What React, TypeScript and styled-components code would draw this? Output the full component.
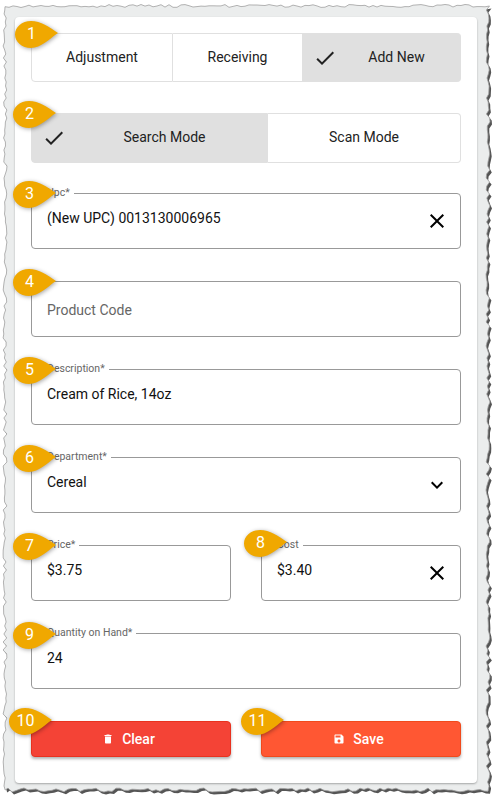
import { ReactNode } from 'react';
import styled, { createGlobalStyle } from 'styled-components';

const GlobalStyle = createGlobalStyle`
    html, body {
        margin: 0;
        background: #fff;
        font-family: Roboto, "Liberation Sans", sans-serif;
    }
`;

const Page = styled.div`
    position: relative;
    width: 504px;
    height: 808px;
    overflow: hidden;
    box-sizing: border-box;
    padding: 17px 27px 25px 15px;
`;

const TornEdge = styled.svg`
    position: absolute;
    left: 0;
    top: 0;
`;

const Card = styled.main`
    position: relative;
    box-sizing: border-box;
    height: 766px;
    padding: 16px;
    background: #fff;
    border-radius: 4px;
    box-shadow: 0 1px 2px rgba(0, 0, 0, 0.3);
    display: flex;
    flex-direction: column;
    gap: 32px;
`;

const ToggleGroup = styled.div<{ $columns: string; $height: number; $pull: number }>`
    display: grid;
    grid-template-columns: ${p => p.$columns};
    height: ${p => p.$height}px;
    margin-bottom: -${p => p.$pull}px;

    button {
        padding-bottom: ${p => p.$pull}px;
    }
`;

const Toggle = styled.button<{ $selected?: boolean }>`
    display: flex;
    align-items: center;
    justify-content: center;
    padding: ${p => (p.$selected ? '0 4px 0 10px' : '0')};
    border: 1px solid #e0e0e0;
    border-left-width: 0;
    background: ${p => (p.$selected ? '#e0e0e0' : '#fff')};
    color: #222;
    font: 400 14px Roboto, sans-serif;

    &:first-child {
        border-left-width: 1px;
        border-radius: 4px 0 0 4px;
    }

    &:last-child {
        border-radius: 0 4px 4px 0;
    }

    svg {
        margin-top: 1px;
    }

    span {
        flex: 1;
        text-align: center;
    }
`;

const FieldRow = styled.div`
    display: grid;
    grid-template-columns: 200px 200px;
    gap: 30px;
`;

const FieldBox = styled.div`
    position: relative;
    display: flex;
    align-items: center;
    box-sizing: border-box;
    height: 56px;
    padding: 0 11px 0 15px;
    border: 1px solid #999;
    border-radius: 4px;
`;

const FieldLabel = styled.label`
    position: absolute;
    left: 11px;
    top: -7px;
    padding: 0 4px;
    background: #fff;
    color: #666;
    font-size: 10.5px;
    line-height: 12px;
`;

const FieldInput = styled.input<{ $lift: number }>`
    flex: 1;
    min-width: 0;
    height: 100%;
    box-sizing: border-box;
    padding: ${p => (p.$lift < 0 ? -p.$lift : 0)}px 0 ${p => (p.$lift > 0 ? p.$lift : 0)}px;
    border: 0;
    outline: 0;
    background: transparent;
    color: #111;
    font: 400 14px Roboto, sans-serif;

    &::placeholder {
        color: #666;
        opacity: 1;
    }
`;

const ActionRow = styled.div`
    display: grid;
    grid-template-columns: 200px 200px;
    gap: 30px;
`;

const ActionButton = styled.button<{ $color: string; $edge: string }>`
    display: flex;
    align-items: center;
    justify-content: center;
    gap: 8px;
    height: 36px;
    padding: 0 5px 0 0;
    border: 1px solid ${p => p.$edge};
    border-radius: 4px;
    background: ${p => p.$color};
    color: #fff;
    font: 500 14px Roboto, sans-serif;
    box-shadow: 0 2px 3px rgba(0, 0, 0, 0.3);
`;

const Badge = styled.div<{ $left: number; $top: number }>`
    position: absolute;
    left: ${p => p.$left - 15}px;
    top: ${p => p.$top - 17}px;
    width: 44px;
    height: 28px;
    color: #fff;
    font-size: 16px;
`;

const BadgeShape = styled.svg`
    position: absolute;
    left: 0;
    top: 0;
    overflow: visible;
    filter: drop-shadow(1px 1px 2px rgba(0, 0, 0, 0.35));
`;

const BadgeNumber = styled.span`
    position: absolute;
    left: 0;
    top: 0;
    width: 33px;
    line-height: 25px;
    text-align: center;
`;

// same glyphs as the material icon set
const ICONS = {
    check: 'M9 16.17 4.83 12l-1.42 1.41L9 19 21 7l-1.41-1.41z',
    close: 'M19 6.41 17.59 5 12 10.59 6.41 5 5 6.41 10.59 12 5 17.59 6.41 19 12 13.41 17.59 19 19 17.59 13.41 12z',
    expand: 'M16.59 8.59 12 13.17 7.41 8.59 6 10l6 6 6-6z',
    trash: 'M6 19c0 1.1.9 2 2 2h8c1.1 0 2-.9 2-2V7H6v12zM19 4h-3.5l-1-1h-5l-1 1H5v2h14V4z',
    save: 'M17 3H5c-1.11 0-2 .9-2 2v14c0 1.1.89 2 2 2h14c1.1 0 2-.9 2-2V7l-4-4zm-5 16c-1.66 0-3-1.34-3-3s1.34-3 3-3 3 1.34 3 3-1.34 3-3 3zm3-10H5V5h10v4z',
};

function Icon({ name, size = 24 }: { name: keyof typeof ICONS; size?: number }): JSX.Element {
    return (
        <svg width={size} height={size} viewBox="0 0 24 24" fill="currentColor" style={{ flexShrink: 0 }}>
            <path d={ICONS[name]} />
        </svg>
    );
}

// jagged outline of the "torn paper" screenshot frame
function tornPath(): string {
    let seed = 17;
    const jitter = (amount: number) => {
        seed = (seed * 16807) % 2147483647;
        return ((seed % 1000) / 1000 - 0.5) * amount;
    };
    const points: string[] = [];
    const [l, t, r, b] = [5, 6, 488, 790];
    for (let x = l; x < r; x += 4) points.push(`${x},${(t + jitter(3)).toFixed(1)}`);
    for (let y = t; y < b; y += 4) points.push(`${(r + jitter(4)).toFixed(1)},${y}`);
    for (let x = r; x > l; x -= 4) points.push(`${x},${(b + jitter(4)).toFixed(1)}`);
    for (let y = b; y > t; y -= 4) points.push(`${(l + jitter(4)).toFixed(1)},${y}`);
    return `M${points.join('L')}Z`;
}

const TORN = tornPath();

interface FieldProps {
    label?: string;
    value?: string;
    placeholder?: string;
    lift?: number;
    icon?: keyof typeof ICONS;
}

function Field({ label, value, placeholder, lift = 6, icon }: FieldProps): JSX.Element {
    return (
        <FieldBox>
            {label && <FieldLabel>{label}</FieldLabel>}
            <FieldInput $lift={lift} readOnly value={value ?? ''} placeholder={placeholder} />
            {icon && <Icon name={icon} />}
        </FieldBox>
    );
}

const BADGES: { n: number; left: number; top: number }[] = [
    { n: 1, left: 15, top: 21 },
    { n: 2, left: 13, top: 101 },
    { n: 3, left: 13, top: 181 },
    { n: 4, left: 13, top: 269 },
    { n: 5, left: 13, top: 357 },
    { n: 6, left: 13, top: 445 },
    { n: 7, left: 13, top: 533 },
    { n: 8, left: 244, top: 530 },
    { n: 9, left: 13, top: 622 },
    { n: 10, left: 9, top: 708 },
    { n: 11, left: 241, top: 708 },
];

function Callout({ n, left, top }: { n: number; left: number; top: number }): ReactNode {
    return (
        <Badge $left={left} $top={top}>
            <BadgeShape width="44" height="28" viewBox="0 0 44 28">
                <path d="M16 0C26 0 34 6 43 12C34 18 26 27 16 27C7 27 0 21 0 13.5C0 6 7 0 16 0Z" fill="#f0a800" />
            </BadgeShape>
            <BadgeNumber>{n}</BadgeNumber>
        </Badge>
    );
}

export default function App(): JSX.Element {
    return (
        <Page>
            <GlobalStyle />
            <TornEdge width="504" height="808">
                <defs>
                    <filter id="edgeBlur">
                        <feGaussianBlur stdDeviation="0.7" />
                    </filter>
                </defs>
                <path d={TORN} fill="#555" transform="translate(2 2.5)" filter="url(#edgeBlur)" />
                <path d={TORN} fill="#ebeded" stroke="#a0a0a0" strokeWidth="0.8" />
            </TornEdge>
            <Card>
                <ToggleGroup $columns="142px 130px 158px" $height={49} $pull={1}>
                    <Toggle>Adjustment</Toggle>
                    <Toggle>Receiving</Toggle>
                    <Toggle $selected>
                        <Icon name="check" />
                        <span>Add New</span>
                    </Toggle>
                </ToggleGroup>
                <ToggleGroup $columns="237px 193px" $height={50} $pull={2}>
                    <Toggle $selected>
                        <Icon name="check" />
                        <span>Search Mode</span>
                    </Toggle>
                    <Toggle>Scan Mode</Toggle>
                </ToggleGroup>
                <Field label="Upc*" value="(New UPC) 0013130006965" icon="close" />
                <Field placeholder="Product Code" lift={-1} />
                <Field label="Description*" value="Cream of Rice, 14oz" />
                <Field label="Department*" value="Cereal" icon="expand" />
                <FieldRow>
                    <Field label="Price*" value="$3.75" />
                    <Field label="Cost" value="$3.40" icon="close" />
                </FieldRow>
                <Field label="Quantity on Hand*" value="24" />
                <ActionRow>
                    <ActionButton $color="#f44336" $edge="#e8321f">
                        <Icon name="trash" size={12} />
                        Clear
                    </ActionButton>
                    <ActionButton $color="#ff5733" $edge="#f04a1c">
                        <Icon name="save" size={12} />
                        Save
                    </ActionButton>
                </ActionRow>
                {BADGES.map(b => (
                    <Callout key={b.n} n={b.n} left={b.left} top={b.top} />
                ))}
            </Card>
        </Page>
    );
}
